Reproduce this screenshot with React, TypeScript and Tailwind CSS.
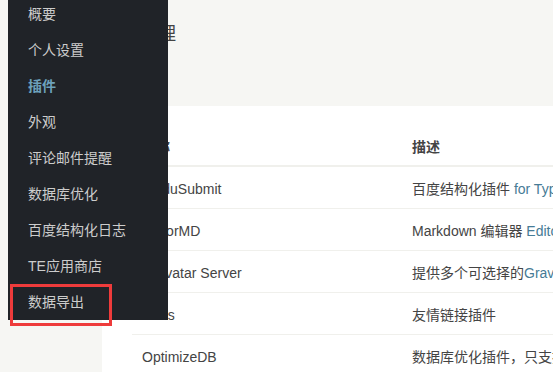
const FONT = "font-['Liberation_Sans','Noto_Sans_CJK_SC',sans-serif]"

const MENU = [
  { label: '概要' },
  { label: '个人设置' },
  { label: '插件', active: true },
  { label: '外观' },
  { label: '评论邮件提醒' },
  { label: '数据库优化' },
  { label: '百度结构化日志' },
  { label: 'TE应用商店' },
  { label: '数据导出' },
]

type Plugin = {
  name: string
  desc: React.ReactNode
}

const PLUGINS: Plugin[] = [
  {
    name: 'BaiduSubmit',
    desc: (
      <>
        百度结构化插件 <span className="text-[#467B96]">for Typecho</span>，自动推送文章到百度
      </>
    ),
  },
  {
    name: 'EditorMD',
    desc: (
      <>
        Markdown 编辑器 <span className="text-[#467B96]">Editor.md</span> for Typecho
      </>
    ),
  },
  {
    name: 'Gravatar Server',
    desc: (
      <>
        提供多个可选择的<span className="text-[#467B96]">Gravatar</span>头像服务器
      </>
    ),
  },
  { name: 'Links', desc: '友情链接插件' },
  { name: 'OptimizeDB', desc: '数据库优化插件，只支持MySQL' },
]

function DropdownMenu() {
  return (
    <div className="absolute left-[8px] top-[-4px] w-[160px] bg-[#202328]">
      {MENU.map((item) => (
        <div
          key={item.label}
          className={
            item.active
              ? 'flex h-[36px] items-center pl-[20px] text-[14px] font-bold text-[#6DA1BB]'
              : 'flex h-[36px] items-center pl-[20px] text-[14px] text-[#cccccc]'
          }
        >
          {item.label}
        </div>
      ))}
    </div>
  )
}

export default function App() {
  return (
    <div className={`relative h-[372px] w-[553px] overflow-hidden bg-[#F6F6F3] text-[#444] ${FONT}`}>
      <div className="flex flex-col pl-[102px]">
        {/* page title */}
        <div className="h-[106px]">
          <h2 className="ml-[2px] mt-[21px] text-[18px] leading-[27px] text-[#444]">插件管理</h2>
        </div>

        {/* table panel */}
        <div className="w-[600px] bg-white px-[30px] pt-[21px]">
          <div className="grid h-[40px] grid-cols-[270px_1fr] items-center border-b-2 border-[#F0F0EC] pt-[2px] text-[14px] font-bold text-[#444]">
            <div className="pl-[10px]">名称</div>
            <div className="pl-[10px]">描述</div>
          </div>
          {PLUGINS.map((p) => (
            <div
              key={p.name}
              className="grid h-[42px] grid-cols-[270px_1fr] items-center border-b border-[#F0F0EC] pt-[4px] text-[14px]"
            >
              <div className="pl-[10px]">{p.name}</div>
              <div className="overflow-hidden whitespace-nowrap pl-[10px]">{p.desc}</div>
            </div>
          ))}
        </div>
      </div>

      <DropdownMenu />

      {/* highlight box */}
      <div className="absolute left-[10px] top-[284px] h-[42px] w-[102px] border-[3px] border-[#EE3B3B]" />
    </div>
  )
}
